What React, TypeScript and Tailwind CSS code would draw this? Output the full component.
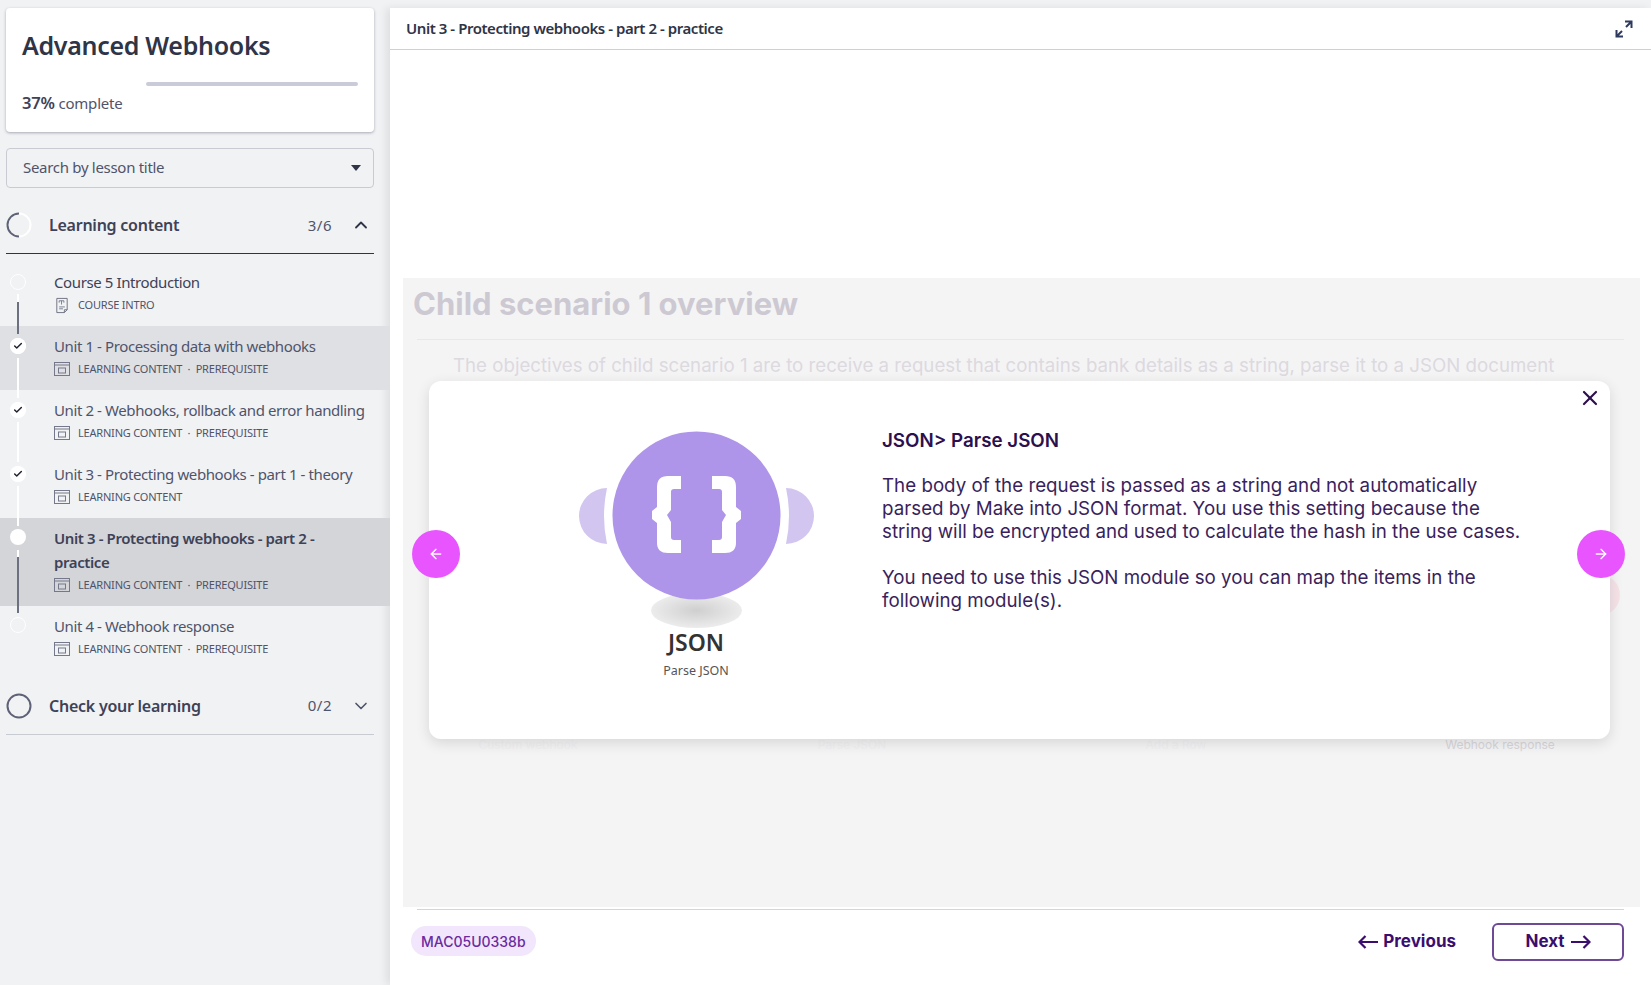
import { ArrowLeft, ArrowRight, Check, ChevronDown, ChevronUp, X } from 'lucide-react';

type Lesson = {
  title: string;
  meta: string[];
  kind: 'intro' | 'content';
  done?: boolean;
  rowClass?: string;
  titleClass?: string;
  line?: string;
};

const lessons: Lesson[] = [
  {
    title: 'Course 5 Introduction',
    meta: ['COURSE INTRO'],
    kind: 'intro',
    rowClass: 'h-[64px]',
    titleClass: 'text-[#3d4257]',
    line: 'bg-[#6d7080]',
  },
  {
    title: 'Unit 1 - Processing data with webhooks',
    meta: ['LEARNING CONTENT', 'PREREQUISITE'],
    kind: 'content',
    done: true,
    rowClass: 'h-[64px] bg-[#dfe0e4]',
  },
  {
    title: 'Unit 2 - Webhooks, rollback and error handling',
    meta: ['LEARNING CONTENT', 'PREREQUISITE'],
    kind: 'content',
    done: true,
    rowClass: 'h-[64px]',
  },
  {
    title: 'Unit 3 - Protecting webhooks - part 1 - theory',
    meta: ['LEARNING CONTENT'],
    kind: 'content',
    done: true,
    rowClass: 'h-[64px]',
  },
];

const SEP = '\u00a0\u00a0·\u00a0\u00a0';

const MetaIcon = ({ kind }: { kind: Lesson['kind'] }) =>
  kind === 'intro' ? (
    <svg viewBox="0 0 16 18" className="h-[17px] w-[16px] shrink-0" fill="none" stroke="#6d7080">
      <path d="M2.500 1.500h11v12l-3 3h-8z" />
      <path d="M10.500 16.500v-3h3" />
      <path d="M5 6V4h5v2M7.500 4v4M5 10.500h6M5 12.500h4" strokeWidth="0.9" />
    </svg>
  ) : (
    <svg viewBox="0 0 16 14" className="h-[14px] w-[16px] shrink-0" fill="none" stroke="#75788a">
      <rect x="0.5" y="0.5" width="15" height="13" />
      <path d="M0.500 3h15" />
      <rect x="4.5" y="6" width="7" height="5" />
    </svg>
  );

const LessonRow = ({ lesson }: { lesson: Lesson }) => (
  <div className={`relative flex flex-col pl-[54px] pt-[8px] ${lesson.rowClass}`}>
    <div className="absolute left-[10px] top-[12px] flex h-[16px] w-[16px] items-center justify-center rounded-full border border-white">
      {lesson.done && (
        <span className="flex h-[16px] w-[16px] shrink-0 items-center justify-center rounded-full bg-white">
          <Check size={10} strokeWidth={3.5} color="#1f2233" />
        </span>
      )}
    </div>
    <div className="absolute left-[17px] top-[32px] z-10 h-[40px] w-[2px] bg-white" />
    {lesson.line && <div className="absolute left-[17px] top-[40px] z-10 h-[32px] w-[2px] bg-[#6d7080]" />}
    <p className={`text-[15px] leading-[24px] tracking-[-0.4px] ${lesson.titleClass ?? 'text-[#50546a]'}`}>{lesson.title}</p>
    <div className="mt-[3px] flex h-[16px] items-center gap-[8px] text-[11px] tracking-[-0.2px] text-[#50546a]">
      <MetaIcon kind={lesson.kind} />
      <span>{lesson.meta.join(SEP)}</span>
    </div>
  </div>
);

const Ring = ({ half }: { half?: boolean }) => (
  <svg viewBox="0 0 26 26" className="h-[26px] w-[26px] shrink-0" fill="none" strokeWidth="2">
    {half ? (
      <>
        <circle cx="13" cy="13" r="11.5" stroke="#ffffff" />
        <path d="M13 1.500a11.500 11.500 0 0 0 0 23" stroke="#5f6276" />
      </>
    ) : (
      <circle cx="13" cy="13" r="11.5" stroke="#5f6276" />
    )}
  </svg>
);

const Sidebar = () => (
  <aside className="w-[390px] shrink-0">
    <div className="ml-[6px] mr-[16px] mt-[8px] h-[124px] rounded-[4px] bg-white px-[16px] pt-[17px] shadow-[0_1px_3px_rgba(30,35,60,0.35)]">
      <h1 className="text-[25px] font-semibold leading-[40px] tracking-[-0.3px] text-[#2f3447]">Advanced Webhooks</h1>
      <div className="ml-[124px] mt-[17px] h-[4px] w-[212px] rounded-full bg-[#c9cbd8]" />
      <p className="mt-[5px] text-[15px] leading-[24px] tracking-[-0.2px] text-[#50546a]">
        <span className="text-[16.5px] font-semibold text-[#3d4257]">37%</span> complete
      </p>
    </div>
    <div className="ml-[6px] mr-[16px] mt-[16px] flex h-[40px] items-center justify-between rounded-[4px] border border-[#c9cbd3] pb-[1px] pl-[16px] pr-[12px] text-[15px] tracking-[-0.3px] text-[#50546a]">
      <span>Search by lesson title</span>
      <svg viewBox="0 0 10 6" className="h-[6px] w-[10px]">
        <path d="M0 0h10L5 6z" fill="#2f3447" />
      </svg>
    </div>
    <div className="ml-[6px] mr-[16px] mt-[14px] flex h-[52px] items-center border-b border-[#2f3447] pb-[5px]">
      <Ring half />
      <span className="ml-[17px] flex-1 text-[16px] font-semibold tracking-[-0.25px] text-[#3d4257]">Learning content</span>
      <span className="text-[15px] tracking-[0.5px] text-[#50546a]">3/6</span>
      <ChevronUp size={20} strokeWidth={2.2} color="#2f3447" className="ml-[19px] mr-[3px]" />
    </div>
    <div className="mt-[8px]">
      {lessons.map((lesson) => (
        <LessonRow key={lesson.title} lesson={lesson} />
      ))}
      <div className="relative flex h-[88px] flex-col bg-[#d4d5d9] pl-[54px] pt-[8px]">
        <div className="absolute left-[10px] top-[11px] h-[16px] w-[16px] rounded-full bg-white" />
        <div className="absolute left-[17px] top-[32px] h-[7px] w-[2px] bg-white" />
        <div className="absolute left-[17px] top-[39px] z-10 h-[56px] w-[2px] bg-[#6d7080]" />
        <p className="text-[15px] font-semibold leading-[24px] tracking-[-0.4px] text-[#3d4257]">
          Unit 3 - Protecting webhooks - part 2 -<br />practice
        </p>
        <div className="mt-[3px] flex h-[16px] items-center gap-[8px] text-[11px] tracking-[-0.2px] text-[#50546a]">
          <MetaIcon kind="content" />
          <span>LEARNING CONTENT{SEP}PREREQUISITE</span>
        </div>
      </div>
      <div className="relative flex h-[64px] flex-col pl-[54px] pt-[8px]">
        <div className="absolute left-[10px] top-[11px] h-[16px] w-[16px] rounded-full border border-white" />
        <p className="text-[15px] leading-[24px] tracking-[-0.4px] text-[#50546a]">Unit 4 - Webhook response</p>
        <div className="mt-[3px] flex h-[16px] items-center gap-[8px] text-[11px] tracking-[-0.2px] text-[#50546a]">
          <MetaIcon kind="content" />
          <span>LEARNING CONTENT{SEP}PREREQUISITE</span>
        </div>
      </div>
    </div>
    <div className="ml-[6px] mr-[16px] mt-[8px] flex h-[57px] items-center border-b border-[#c9cbd3] pb-[1px]">
      <Ring />
      <span className="ml-[17px] flex-1 text-[16px] font-semibold tracking-[-0.25px] text-[#3d4257]">Check your learning</span>
      <span className="text-[15px] tracking-[0.5px] text-[#50546a]">0/2</span>
      <ChevronDown size={20} strokeWidth={2} color="#50546a" className="ml-[19px] mr-[3px]" />
    </div>
  </aside>
);

const BRACE =
  'M681 476H668Q657 476 657 487V507L652 511V519L657 523V543Q657 553 668 553H681V540H674Q671 540 671 537V522L667 515L671 510V492Q671 489 674 489H681Z';
const LOBE = 'M607 488A28 28 0 0 0 607 544Q601 516 607 488Z';

const JsonIcon = () => (
  <svg viewBox="570 425 252 205" className="h-[205px] w-[252px]">
    <defs>
      <radialGradient id="shade">
        <stop offset="0%" stopColor="#cfcfcf" />
        <stop offset="100%" stopColor="#ececec" />
      </radialGradient>
    </defs>
    <ellipse cx="696.5" cy="610.5" rx="45.5" ry="17.5" fill="url(#shade)" />
    <path d={LOBE} fill="#d2c5ef" />
    <path d={LOBE} fill="#d2c5ef" transform="translate(1393 0) scale(-1 1)" />
    <circle cx="696.5" cy="515.5" r="84" fill="#ae95e9" />
    <path d={BRACE} fill="#ffffff" />
    <path d={BRACE} fill="#ffffff" transform="translate(1393 0) scale(-1 1)" />
  </svg>
);

const Modal = () => (
  <div className="absolute left-[26px] top-[103px] flex h-[358px] w-[1181px] rounded-[12px] bg-white font-['Inter',sans-serif] shadow-[0_4px_14px_rgba(0,0,0,0.12)]">
    <div className="w-[453px] shrink-0 pl-[141px] pt-[44px]">
      <JsonIcon />
      <div className="w-[252px] text-center font-['Noto_Sans',sans-serif]">
        <p className="mt-[-4px] text-[23px] font-semibold leading-[32px] text-[#333333]">JSON</p>
        <p className="mt-[4px] text-[12.5px] leading-[18px] text-[#555555]">Parse JSON</p>
      </div>
    </div>
    <div className="w-[640px] pt-[48px] text-[18.75px] leading-[23px] text-[#3a1f5c]">
      <h2 className="font-semibold text-[#2d0f4d]">JSON&gt; Parse JSON</h2>
      <p className="mt-[22px]">
        The body of the request is passed as a string and not automatically
        <br />
        parsed by Make into JSON format. You use this setting because the
        <br />
        string will be encrypted and used to calculate the hash in the use cases.
      </p>
      <p className="mt-[23px]">
        You need to use this JSON module so you can map the items in the
        <br />
        following module(s).
      </p>
    </div>
    <X size={24} strokeWidth={2.2} color="#2d0f4d" className="absolute right-[8px] top-[5px]" />
  </div>
);

const LongArrow = ({ left }: { left?: boolean }) => (
  <svg
    viewBox="0 0 20 14"
    className={`h-[14px] w-[20px] ${left ? 'rotate-180' : ''}`}
    fill="none"
    stroke="currentColor"
    strokeWidth="2.2"
  >
    <path d="M0 7h18.500M12.500 1l6 6-6 6" />
  </svg>
);

const Main = () => (
  <main className="flex min-w-0 flex-1 flex-col bg-white font-['Inter',sans-serif] shadow-[-4px_0_8px_rgba(0,0,0,0.08)]">
    <header className="flex h-[42px] shrink-0 items-center justify-between border-b border-[#d0d0d0] pl-[16px] pr-[18px] font-['Noto_Sans',sans-serif]">
      <span className="text-[15px] font-semibold tracking-[-0.45px] text-[#2f3447]">
        Unit 3 - Protecting webhooks - part 2 - practice
      </span>
      <svg viewBox="0 0 18 18" className="h-[18px] w-[18px]" fill="none" stroke="#2f3a5f" strokeWidth="2">
        <path d="M10 1.500h6.500V8M16 2l-5 5M8 16.500H1.500V10M2 16l5-5" />
      </svg>
    </header>
    <div className="relative ml-[13px] mr-[11px] mt-[228px] h-[629px] shrink-0 bg-[#f4f4f5]">
      <h2 className="pl-[10px] pt-[2px] text-[31px] font-bold leading-[48px] text-[#cdc9d2]">Child scenario 1 overview</h2>
      <div className="ml-[14px] mr-[16px] mt-[11px] h-px bg-[#e8e7ea]" />
      <p className="ml-[50px] mt-[14px] whitespace-nowrap text-[18.7px] leading-[24px] text-[#dcd9df]">
        The objectives of child scenario 1 are to receive a request that contains bank details as a string, parse it to a JSON document
      </p>
      <div className="ml-[25px] mt-[359px] flex gap-[124px] text-[12px] leading-[16px] text-[#d8d6da]">
        <span className="w-[200px] text-center text-[#f0eff1]">Custom webhook</span>
        <span className="w-[200px] text-center text-[#f0eff1]">Parse JSON</span>
        <span className="w-[200px] text-center text-[#f0eff1]">Add a Row</span>
        <span className="w-[200px] text-center">Webhook response</span>
      </div>
      <div className="absolute left-[1177px] top-[297px] h-[40px] w-[40px] rounded-full bg-[#f5e3e8]" />
      <Modal />
      <button className="absolute left-[9px] top-[252px] flex h-[48px] w-[48px] items-center justify-center rounded-full bg-[#e855ff]">
        <ArrowLeft size={16} strokeWidth={2} color="#ffffff" />
      </button>
      <button className="absolute left-[1174px] top-[252px] flex h-[48px] w-[48px] items-center justify-center rounded-full bg-[#e855ff]">
        <ArrowRight size={16} strokeWidth={2} color="#ffffff" />
      </button>
    </div>
    <div className="ml-[27px] mr-[27px] mt-[2px] h-px shrink-0 bg-[#d9d2d8]" />
    <footer className="flex items-start justify-between pl-[21px] pr-[27px] pt-[13px]">
      <span className="mt-[3px] flex h-[30px] items-center rounded-full bg-[#f1e6fb] px-[10px] font-['Inter',sans-serif] text-[14px] font-medium text-[#6a2ba0]">
        MAC05U0338b
      </span>
      <div className="flex items-center gap-[36px] text-[17px] font-bold text-[#3b0d6e]">
        <span className="flex items-center gap-[5px]">
          <LongArrow left />
          Previous
        </span>
        <span className="flex h-[38px] w-[132px] items-center justify-center gap-[6px] rounded-[6px] border-2 border-[#6e4a96]">
          Next
          <LongArrow />
        </span>
      </div>
    </footer>
  </main>
);

export default function App() {
  return (
    <div className="flex h-[985px] w-full overflow-hidden bg-[#f1f2f4] font-['Noto_Sans',sans-serif]">
      <Sidebar />
      <div className="flex min-w-0 flex-1 pt-[8px]">
        <Main />
      </div>
    </div>
  );
}
